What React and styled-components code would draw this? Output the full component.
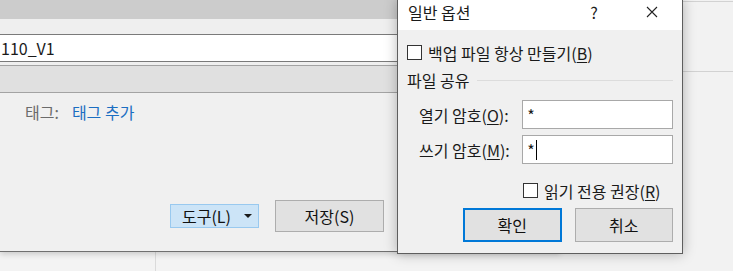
import styled, {createGlobalStyle} from "styled-components";

const GlobalStyle = createGlobalStyle`
  html, body {
    margin: 0;
    padding: 0;
    background: #f3f3f3;
  }
  body {
    font-family: "Noto Sans CJK KR", "Noto Sans", sans-serif;
    font-size: 16px;
    color: #1a1a1a;
  }
`;

const Desktop = styled.div`
  position: relative;
  width: 733px;
  height: 271px;
  overflow: hidden;
  display: grid;
  grid-template-columns: 560px 1fr;
  background: #f3f3f3;
`;

const LeftColumn = styled.div`
  display: flex;
  flex-direction: column;
`;

const BackWindow = styled.div`
  height: 251px;
  display: flex;
  flex-direction: column;
  background: #f0f0f0;
  border-bottom: 1px solid #707070;
  box-shadow: 0 2px 6px rgba(0, 0, 0, 0.18);
  position: relative;
  z-index: 1;
`;

const TopBand = styled.div`
  height: 19px;
  background: #cccccc;
`;

const Gap = styled.div`
  height: ${(p) => p.$h}px;
  background: ${(p) => p.$bg || "#efefef"};
`;

const NameField = styled.div`
  height: 26px;
  background: #ffffff;
  border-top: 1px solid #7a7a7a;
  border-bottom: 1px solid #7a7a7a;
  display: flex;
  align-items: center;
  padding-left: 1px;
  line-height: 1;
  color: #1a1a1a;
`;

const GreyBand = styled.div`
  height: 26px;
  background: #e0e0e0;
  border-top: 1px solid #a3a3a3;
  border-bottom: 1px solid #a3a3a3;
`;

const Content = styled.div`
  flex: 1;
  display: flex;
  flex-direction: column;
`;

const TagRow = styled.div`
  display: flex;
  align-items: center;
  height: 22px;
  margin-top: 8px;
  padding-left: 25px;
  gap: 13px;
`;

const TagLabel = styled.span`
  color: #6b6b6b;
`;

const TagLink = styled.span`
  color: #1b6ec2;
`;

const ActionBar = styled.div`
  display: flex;
  align-items: center;
  gap: 16px;
  margin-top: 77px;
  padding-left: 170px;
`;

const ToolsButton = styled.div`
  width: 89px;
  height: 24px;
  box-sizing: border-box;
  background: #cce4f7;
  border: 1px solid #99c9ef;
  display: flex;
  align-items: center;
  justify-content: space-between;
  padding: 0 5px 0 11px;
  color: #111;
`;

const PlainButton = styled.div`
  width: ${(p) => p.$w}px;
  height: ${(p) => p.$h}px;
  box-sizing: border-box;
  background: #e1e1e1;
  border: ${(p) => (p.$primary ? "2px solid #0078d7" : "1px solid #adadad")};
  display: flex;
  align-items: center;
  justify-content: center;
  color: #111;
`;

const LowerStrip = styled.div`
  flex: 1;
  display: grid;
  grid-template-columns: 156px 1fr;
  background: #f3f3f3;
`;

const StripCell = styled.div`
  border-right: ${(p) => (p.$divider ? "1px solid #dadada" : "none")};
`;

const SidePane = styled.div`
  background: #f2f2f2;
  display: flex;
  flex-direction: column;
`;

const SideLine = styled.div`
  height: ${(p) => p.$h}px;
  border-bottom: 1px solid #d2d2d2;
`;

/* dialog floats over the document window */
const Dialog = styled.div`
  position: absolute;
  left: 397px;
  top: -1px;
  width: 286px;
  height: 255px;
  box-sizing: border-box;
  border: 1px solid #5e5e5e;
  background: #f0f0f0;
  box-shadow: 0 0 12px rgba(0, 0, 0, 0.28);
  display: flex;
  flex-direction: column;
  z-index: 5;
`;

const TitleBar = styled.div`
  height: 30px;
  background: #ffffff;
  display: flex;
  align-items: center;
  padding-left: 10px;
  padding-bottom: 6px;
  box-sizing: border-box;
`;

const Title = styled.span`
  flex: 1;
`;

const TitleIcon = styled.div`
  width: ${(p) => p.$w}px;
  margin-right: ${(p) => p.$mr || 0}px;
  display: flex;
  justify-content: center;
  font-size: 16px;
`;

const DialogBody = styled.div`
  flex: 1;
  display: flex;
  flex-direction: column;
  padding: 0 9px;
`;

const CheckRow = styled.label`
  display: flex;
  align-items: center;
  gap: 6px;
  height: 15px;
  margin-top: ${(p) => p.$mt}px;
  margin-left: ${(p) => p.$ml || 0}px;
`;

const Box = styled.span`
  width: 15px;
  height: 15px;
  box-sizing: border-box;
  border: 1px solid #333333;
  background: #ffffff;
  flex-shrink: 0;
`;

const Mnemonic = styled.u`
  text-underline-offset: 2px;
`;

const GroupHeader = styled.div`
  display: flex;
  align-items: center;
  height: 20px;
  margin-top: 10px;
  gap: 8px;
`;

const GroupRule = styled.div`
  flex: 1;
  height: 1px;
  background: #dcdcdc;
`;

const FieldRow = styled.div`
  display: flex;
  align-items: center;
  height: 29px;
  margin-top: ${(p) => p.$mt}px;
`;

const FieldLabel = styled.span`
  width: 116px;
  padding-left: 12px;
  box-sizing: border-box;
`;

const PasswordBox = styled.div`
  width: 152px;
  height: 29px;
  box-sizing: border-box;
  background: #ffffff;
  border: 1px solid #a8a8a8;
  display: flex;
  align-items: center;
  padding-left: 4px;
`;

const Caret = styled.span`
  width: 1px;
  height: 20px;
  background: #000;
  margin-left: 1px;
`;

const DialogButtons = styled.div`
  display: flex;
  gap: 13px;
  margin-top: 10px;
  padding-left: 56px;
`;

function DropArrow() {
    return (
        <svg width="10" height="6" viewBox="0 0 10 6">
            <polygon points="1,1 9,1 5,5" fill="#1a1a1a"/>
        </svg>
    );
}

function CloseIcon() {
    return (
        <svg width="12" height="12" viewBox="0 0 12 12">
            <path d="M1 1 L11 11 M11 1 L1 11" stroke="#222" strokeWidth="1.1"/>
        </svg>
    );
}

export default function App() {
    return (
        <>
            <GlobalStyle/>
            <Desktop>
                <LeftColumn>
                    <BackWindow>
                        <TopBand/>
                        <Gap $h={15}/>
                        <NameField>110_V1</NameField>
                        <Gap $h={3}/>
                        <GreyBand/>
                        <Content>
                            <TagRow>
                                <TagLabel>태그:</TagLabel>
                                <TagLink>태그 추가</TagLink>
                            </TagRow>
                            <ActionBar>
                                <ToolsButton>
                                    <span>도구(L)</span>
                                    <DropArrow/>
                                </ToolsButton>
                                <PlainButton $w={109} $h={32}>저장(S)</PlainButton>
                            </ActionBar>
                        </Content>
                    </BackWindow>
                    <LowerStrip>
                        <StripCell $divider/>
                        <StripCell/>
                    </LowerStrip>
                </LeftColumn>
                <SidePane>
                    <SideLine $h={1}/>
                    <SideLine $h={69}/>
                </SidePane>

                <Dialog>
                    <TitleBar>
                        <Title>일반 옵션</Title>
                        <TitleIcon $w={12} $mr={22}>?</TitleIcon>
                        <TitleIcon $w={60}><CloseIcon/></TitleIcon>
                    </TitleBar>
                    <DialogBody>
                        <CheckRow $mt={15}>
                            <Box/>
                            <span>백업 파일 항상 만들기(<Mnemonic>B</Mnemonic>)</span>
                        </CheckRow>
                        <GroupHeader>
                            <span>파일 공유</span>
                            <GroupRule/>
                        </GroupHeader>
                        <FieldRow $mt={10}>
                            <FieldLabel>열기 암호(<Mnemonic>O</Mnemonic>):</FieldLabel>
                            <PasswordBox>*</PasswordBox>
                        </FieldRow>
                        <FieldRow $mt={6}>
                            <FieldLabel>쓰기 암호(<Mnemonic>M</Mnemonic>):</FieldLabel>
                            <PasswordBox>*<Caret/></PasswordBox>
                        </FieldRow>
                        <CheckRow $mt={19} $ml={116}>
                            <Box/>
                            <span>읽기 전용 권장(<Mnemonic>R</Mnemonic>)</span>
                        </CheckRow>
                        <DialogButtons>
                            <PlainButton $w={99} $h={34} $primary>확인</PlainButton>
                            <PlainButton $w={99} $h={34}>취소</PlainButton>
                        </DialogButtons>
                    </DialogBody>
                </Dialog>
            </Desktop>
        </>
    );
}
